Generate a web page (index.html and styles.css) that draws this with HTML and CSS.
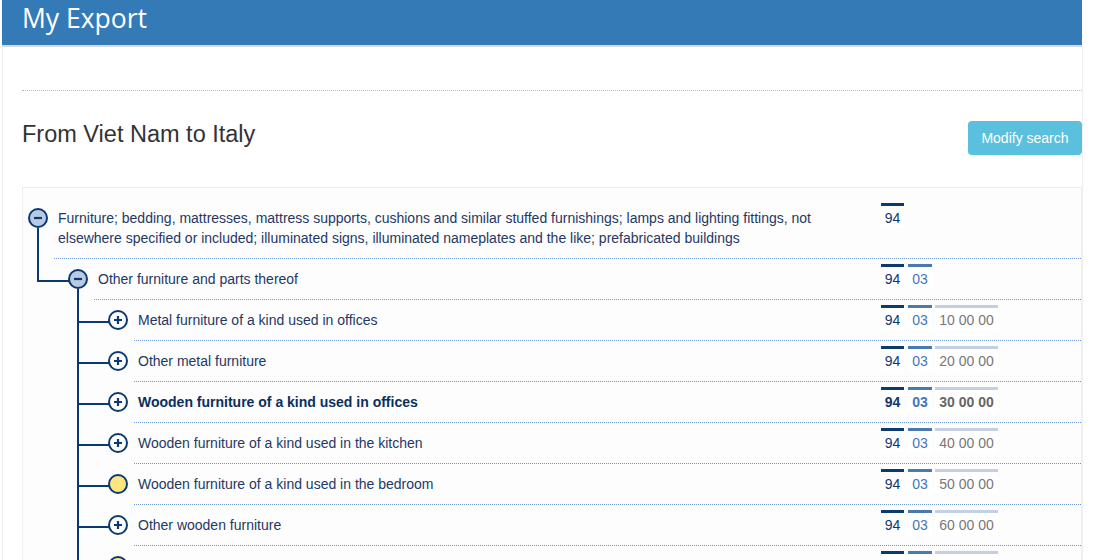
FILE: index.html
```html
<!DOCTYPE html>
<html lang="en">
<head>
  <meta charset="UTF-8">
  <meta name="viewport" content="width=device-width, initial-scale=1.0">
  <title>My Export</title>
  <link rel="stylesheet" href="styles.css">
</head>
<body>
  <div class="wrap">
    <div class="header">My Export</div>
    <div class="content">
      <div class="page-top"></div>

      <div class="title-row">
        <h2 class="title">From Viet Nam to Italy</h2>
        <button class="btn-modify">Modify search</button>
      </div>

      <div class="panel">
        <ul class="tree">
          <li class="node">
            <div class="row open">
              <svg class="icon" viewBox="0 0 20 20"><circle class="c-open" cx="10" cy="10" r="9"/><path d="M6 10h8"/></svg>
              <div class="body">
                <div class="label">Furniture; bedding, mattresses, mattress supports, cushions and similar stuffed furnishings; lamps and lighting fittings, not elsewhere specified or included; illuminated signs, illuminated nameplates and the like; prefabricated buildings</div>
                <div class="codes">
                  <span class="code c1">94</span>
                </div>
              </div>
            </div>
            <ul class="children">
              <li class="node">
                <div class="row open">
                  <svg class="icon" viewBox="0 0 20 20"><circle class="c-open" cx="10" cy="10" r="9"/><path d="M6 10h8"/></svg>
                  <div class="body">
                    <div class="label">Other furniture and parts thereof</div>
                    <div class="codes">
                      <span class="code c1">94</span><span class="code c2">03</span>
                    </div>
                  </div>
                </div>
                <ul class="children">
                  <li class="node">
                    <div class="row">
                      <svg class="icon" viewBox="0 0 20 20"><circle class="c-closed" cx="10" cy="10" r="9"/><path d="M6 10h8M10 6v8"/></svg>
                      <div class="body">
                        <div class="label">Metal furniture of a kind used in offices</div>
                        <div class="codes">
                          <span class="code c1">94</span><span class="code c2">03</span><span class="code c3">10 00 00</span>
                        </div>
                      </div>
                    </div>
                  </li>
                  <li class="node">
                    <div class="row">
                      <svg class="icon" viewBox="0 0 20 20"><circle class="c-closed" cx="10" cy="10" r="9"/><path d="M6 10h8M10 6v8"/></svg>
                      <div class="body">
                        <div class="label">Other metal furniture</div>
                        <div class="codes">
                          <span class="code c1">94</span><span class="code c2">03</span><span class="code c3">20 00 00</span>
                        </div>
                      </div>
                    </div>
                  </li>
                  <li class="node">
                    <div class="row selected">
                      <svg class="icon" viewBox="0 0 20 20"><circle class="c-closed" cx="10" cy="10" r="9"/><path d="M6 10h8M10 6v8"/></svg>
                      <div class="body">
                        <div class="label">Wooden furniture of a kind used in offices</div>
                        <div class="codes">
                          <span class="code c1">94</span><span class="code c2">03</span><span class="code c3">30 00 00</span>
                        </div>
                      </div>
                    </div>
                  </li>
                  <li class="node">
                    <div class="row">
                      <svg class="icon" viewBox="0 0 20 20"><circle class="c-closed" cx="10" cy="10" r="9"/><path d="M6 10h8M10 6v8"/></svg>
                      <div class="body">
                        <div class="label">Wooden furniture of a kind used in the kitchen</div>
                        <div class="codes">
                          <span class="code c1">94</span><span class="code c2">03</span><span class="code c3">40 00 00</span>
                        </div>
                      </div>
                    </div>
                  </li>
                  <li class="node">
                    <div class="row">
                      <svg class="icon" viewBox="0 0 20 20"><circle class="c-leaf" cx="10" cy="10" r="9"/></svg>
                      <div class="body">
                        <div class="label">Wooden furniture of a kind used in the bedroom</div>
                        <div class="codes">
                          <span class="code c1">94</span><span class="code c2">03</span><span class="code c3">50 00 00</span>
                        </div>
                      </div>
                    </div>
                  </li>
                  <li class="node">
                    <div class="row">
                      <svg class="icon" viewBox="0 0 20 20"><circle class="c-closed" cx="10" cy="10" r="9"/><path d="M6 10h8M10 6v8"/></svg>
                      <div class="body">
                        <div class="label">Other wooden furniture</div>
                        <div class="codes">
                          <span class="code c1">94</span><span class="code c2">03</span><span class="code c3">60 00 00</span>
                        </div>
                      </div>
                    </div>
                  </li>
                  <li class="node">
                    <div class="row">
                      <svg class="icon" viewBox="0 0 20 20"><circle class="c-leaf" cx="10" cy="10" r="9"/></svg>
                      <div class="body">
                        <div class="label">Furniture of plastics</div>
                        <div class="codes">
                          <span class="code c1">94</span><span class="code c2">03</span><span class="code c3">70 00 00</span>
                        </div>
                      </div>
                    </div>
                  </li>
                </ul>
              </li>
            </ul>
          </li>
        </ul>
      </div>
    </div>
  </div>
</body>
</html>
```

FILE: styles.css
```css
* {
  margin: 0;
  padding: 0;
  box-sizing: border-box;
}

html, body {
  overflow: hidden;
}

body {
  background-color: #fff;
  font-family: "Liberation Sans", Arial, sans-serif;
  font-size: 14px;
  color: #333;
}

.wrap {
  width: 1081px;
  margin-left: 2px;
}

.header {
  width: 1080px;
  height: 47px;
  padding-left: 20px;
  background-color: #337ab7;
  border-bottom: 2px solid #d9d9d9;
  color: #fff;
  font-family: "Open Sans", sans-serif;
  font-size: 26.5px;
  line-height: 36px;
}

.content {
  border-left: 1px solid #eee;
  border-right: 1px solid #f0f0f0;
  padding-left: 19px;
  min-height: 600px;
}

.page-top {
  height: 44px;
  border-bottom: 1px dotted #bbb;
}

.title-row {
  display: flex;
  justify-content: space-between;
  align-items: flex-start;
  margin-top: 30px;
  height: 34px;
}

.title {
  font-size: 23.5px;
  font-weight: normal;
  line-height: 26px;
  color: #333;
}

.btn-modify {
  width: 114px;
  height: 34px;
  border: none;
  border-radius: 4px;
  background-color: #5bc0de;
  color: #fff;
  font-family: "Liberation Sans", Arial, sans-serif;
  font-size: 14px;
}

.panel {
  margin-top: 32px;
  border: 1px solid #eee;
  border-bottom: none;
  background-color: #fdfdfd;
  padding-top: 10px;
}

.tree, .children {
  list-style: none;
}

.children {
  padding-left: 40px;
}

.node {
  position: relative;
}

/* connector lines */
.children > .node::before {
  content: "";
  position: absolute;
  left: -26px;
  top: 0;
  width: 31px;
  height: 21px;
  border-left: 2px solid #0b3a72;
  border-bottom: 2px solid #0b3a72;
}

.children > .node:not(:last-child)::after {
  content: "";
  position: absolute;
  left: -26px;
  top: 0;
  bottom: 0;
  border-left: 2px solid #0b3a72;
}

.row {
  position: relative;
  display: flex;
  padding-left: 5px;
}

.row.open::after {
  content: "";
  position: absolute;
  left: 14px;
  top: 30px;
  bottom: 0;
  width: 2px;
  background-color: #0b3a72;
}

.icon {
  flex: none;
  width: 20px;
  height: 20px;
  margin-top: 10px;
  fill: none;
  stroke: #0b3a72;
  stroke-width: 2;
}

.icon path {
  stroke-width: 2.2;
}

.c-open {
  fill: #b9cae2;
}

.c-closed {
  fill: #fff;
}

.c-leaf {
  fill: #ffe57e;
}

.body {
  flex: 1;
  display: flex;
  margin-left: 6px;
  padding-left: 4px;
  border-bottom: 1px dotted #6d98cc;
}

.label {
  flex: 1;
  padding: 10px 20px 10px 0;
  line-height: 20px;
  color: #1f3864;
}

.codes {
  flex: none;
  width: 200px;
  display: flex;
  padding-top: 5px;
}

.code {
  height: 25px;
  border-top: 3px solid;
  padding-top: 2px;
  line-height: 20px;
  text-align: center;
  background-color: #fff;
}

.c1 {
  width: 23px;
  border-color: #0b3a72;
  color: #0e3770;
}

.c2 {
  width: 24px;
  margin-left: 4px;
  border-color: #4a78b0;
  color: #3f76ba;
}

.c3 {
  width: 63px;
  margin-left: 3px;
  border-color: #c3d0e3;
  color: #777;
}

.selected .label,
.selected .code {
  font-weight: bold;
}

.selected .label {
  color: #0b2f5e;
}

.selected .c3 {
  color: #666;
}
```
